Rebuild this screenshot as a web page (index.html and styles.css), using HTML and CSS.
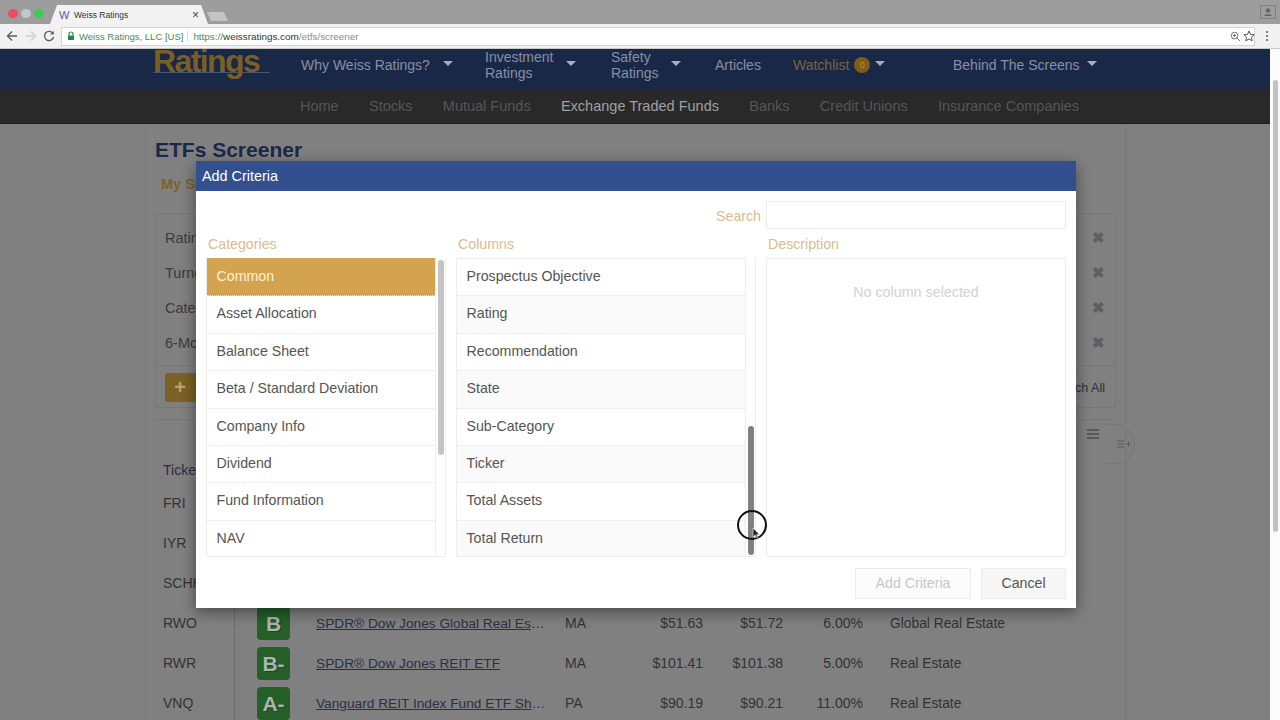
FILE: index.html
```html
<!DOCTYPE html>
<html lang="en">
<head>
<meta charset="utf-8">
<title>Weiss Ratings</title>
<link rel="stylesheet" href="styles.css">
</head>
<body>
<header class="browser">
  <div class="tabstrip">
    <div class="lights"><i class="light red"></i><i class="light grey"></i><i class="light green"></i></div>
    <div class="tab">
      <span class="favicon">W</span>
      <span class="tab-title">Weiss Ratings</span>
      <span class="tab-close">×</span>
    </div>
    <div class="newtab"></div>
    <div class="profile">
      <svg viewBox="0 0 18 16" width="18" height="16"><rect x="1.5" y="1.5" width="15" height="13" fill="none" stroke="#808080"/><circle cx="9" cy="6.5" r="2.2" fill="#666"/><path d="M5 12c.6-2.2 7.4-2.2 8 0z" fill="#666"/></svg>
    </div>
  </div>
  <div class="toolbar">
    <svg class="tool" viewBox="0 0 12 12" width="12" height="12"><path d="M11 6H2M6 1.5 1.5 6 6 10.500" fill="none" stroke="#5f5f5f" stroke-width="1.400"/></svg>
    <svg class="tool" viewBox="0 0 12 12" width="12" height="12"><path d="M1 6h9M6 1.500 10.500 6 6 10.500" fill="none" stroke="#d0d0d0" stroke-width="1.400"/></svg>
    <svg class="tool" viewBox="0 0 12 12" width="12" height="12"><path d="M10 3.500A4.600 4.600 0 1 0 10.600 7" fill="none" stroke="#5f5f5f" stroke-width="1.400"/><path d="M10.800 .8v3.700H7.100z" fill="#5f5f5f"/></svg>
    <div class="omnibox">
      <svg class="lock" viewBox="0 0 8 10" width="8" height="10"><path d="M2 4.500V3a2 2 0 0 1 4 0v1.500" fill="none" stroke="#1f8a4c" stroke-width="1.200"/><rect x="1" y="4.500" width="6" height="4.500" fill="#1f8a4c"/></svg>
      <span class="secure">Weiss Ratings, LLC [US]</span>
      <span class="url"><span class="url-scheme">https://</span><span class="url-host">weissratings.com</span>/etfs/screener</span>
      <svg class="omni-icon" viewBox="0 0 12 12" width="11" height="11"><circle cx="5" cy="5" r="3.600" fill="none" stroke="#666"/><path d="M7.800 7.800 11 11M5 3.300v3.400M3.300 5h3.400" stroke="#666" fill="none"/></svg>
      <svg class="omni-icon star" viewBox="0 0 12 12" width="12" height="12"><path d="m6 1 1.500 3.400 3.700.4-2.800 2.400.8 3.600L6 9 2.800 10.800l.8-3.600L.8 4.800l3.700-.4z" fill="none" stroke="#555"/></svg>
    </div>
    <svg class="menu-dots" viewBox="0 0 4 12" width="4" height="12"><circle cx="2" cy="2" r="1.100" fill="#666"/><circle cx="2" cy="6" r="1.100" fill="#666"/><circle cx="2" cy="10" r="1.100" fill="#666"/></svg>
  </div>
</header>

<div class="viewport">
  <div class="site">
    <nav class="mainnav">
      <div class="logo">Ratings</div>
      <div class="navlinks">
        <a class="nav-item n-why"><span>Why Weiss Ratings?</span><i class="caret"></i></a>
        <a class="nav-item n-inv"><span>Investment<br>Ratings</span><i class="caret"></i></a>
        <a class="nav-item n-saf"><span>Safety<br>Ratings</span><i class="caret"></i></a>
        <a class="nav-item n-art"><span>Articles</span></a>
        <a class="nav-item n-watch"><span>Watchlist</span><span class="count">0</span><i class="caret"></i></a>
        <a class="nav-item n-behind"><span>Behind The Screens</span><i class="caret"></i></a>
      </div>
    </nav>
    <nav class="subnav">
      <a>Home</a><a>Stocks</a><a>Mutual Funds</a><a class="active">Exchange Traded Funds</a><a>Banks</a><a>Credit Unions</a><a>Insurance Companies</a>
    </nav>

    <main class="column">
      <h1 class="title">ETFs Screener</h1>
      <div class="saved">My Saved Screeners</div>
      <section class="criteria">
        <div class="crit-row"><span>Rating</span><b class="remove">✖</b></div>
        <div class="crit-row"><span>Turnover</span><b class="remove">✖</b></div>
        <div class="crit-row"><span>Category</span><b class="remove">✖</b></div>
        <div class="crit-row"><span>6-Month</span><b class="remove">✖</b></div>
        <div class="crit-actions"><span class="plus">+</span><span class="search-all">Search All</span></div>
      </section>
      <section class="results">
        <div class="results-tools">
          <svg class="hamburger" viewBox="0 0 14 10" width="14" height="10"><path d="M1 1h12M1 5h12M1 9h12" stroke="#4d4d4d" stroke-width="1.500"/></svg>
          <div class="add-col">
            <svg viewBox="0 0 16 8" width="16" height="8"><path d="M1 1h7M1 4h7M1 7h7M10 4h5M12.500 1.500v5" stroke="#5c5c5c"/></svg>
          </div>
        </div>
        <div class="row head"><span class="cell-ticker">Ticker</span></div>
        <div class="row"><span class="cell-ticker">FRI</span></div>
        <div class="row"><span class="cell-ticker">IYR</span></div>
        <div class="row"><span class="cell-ticker">SCHH</span></div>
        <div class="row"><span class="cell-ticker">RWO</span><span class="cell-grade"><b class="grade">B</b></span><a class="cell-name">SPDR® Dow Jones Global Real Estate ETF</a><span>MA</span><span class="num">$51.63</span><span class="num">$51.72</span><span class="num">6.00%</span><span class="cell-cat">Global Real Estate</span></div>
        <div class="row"><span class="cell-ticker">RWR</span><span class="cell-grade"><b class="grade">B-</b></span><a class="cell-name">SPDR® Dow Jones REIT ETF</a><span>MA</span><span class="num">$101.41</span><span class="num">$101.38</span><span class="num">5.00%</span><span class="cell-cat">Real Estate</span></div>
        <div class="row"><span class="cell-ticker">VNQ</span><span class="cell-grade"><b class="grade">A-</b></span><a class="cell-name">Vanguard REIT Index Fund ETF Shares</a><span>PA</span><span class="num">$90.19</span><span class="num">$90.21</span><span class="num">11.00%</span><span class="cell-cat">Real Estate</span></div>
      </section>
    </main>

    <div class="modal">
      <div class="modal-head">Add Criteria</div>
      <div class="modal-body">
        <div class="search-row"><label class="gold-label">Search</label><div class="search-input"></div></div>
        <div class="pickers">
          <div class="picker">
            <div class="gold-label picker-label">Categories</div>
            <div class="listbox">
              <ul class="list">
                <li class="selected">Common</li><li>Asset Allocation</li><li>Balance Sheet</li><li>Beta / Standard Deviation</li><li>Company Info</li><li>Dividend</li><li>Fund Information</li><li>NAV</li>
              </ul>
              <div class="thumb thumb-cat"></div>
            </div>
          </div>
          <div class="picker">
            <div class="gold-label picker-label">Columns</div>
            <div class="listbox">
              <ul class="list zebra">
                <li>Prospectus Objective</li><li>Rating</li><li>Recommendation</li><li>State</li><li>Sub-Category</li><li>Ticker</li><li>Total Assets</li><li>Total Return</li>
              </ul>
              <div class="thumb thumb-col"></div>
            </div>
          </div>
          <div class="picker">
            <div class="gold-label picker-label">Description</div>
            <div class="descbox">No column selected</div>
          </div>
        </div>
        <div class="modal-foot">
          <button class="btn disabled">Add Criteria</button>
          <button class="btn cancel">Cancel</button>
        </div>
      </div>
      <div class="pointer">
        <svg viewBox="0 0 8 12" width="8" height="12"><path d="M1 1v9l2.200-2 1.500 3 1.400-.7-1.500-2.900H7.500z" fill="#222" stroke="#eee" stroke-width=".6"/></svg>
      </div>
    </div>
  </div>
  <div class="page-scroll"><div class="page-thumb"></div></div>
</div>
</body>
</html>
```
FILE: styles.css
```css
* { box-sizing: border-box; }
html, body { margin: 0; height: 720px; overflow: hidden; }
body { font-family: "Liberation Sans", Arial, sans-serif; background: #808080; color: #3b3b3b; }
ul { list-style: none; margin: 0; padding: 0; }

/* browser */
.browser { height: 49px; background: #f1f1f1; border-bottom: 1px solid #c9c9c9; }
.tabstrip { height: 24px; background: #9d9d9d; display: flex; align-items: flex-end; position: relative; }
.lights { display: flex; gap: 3px; padding-left: 8px; width: 50px; align-self: flex-start; padding-top: 9px; }
.light { width: 10px; height: 9px; border-radius: 50%; display: block; }
.red { background: #ee4b5b; }
.grey { background: #c6c6c6; }
.green { background: #3ecb55; }
.tab { width: 158px; height: 19px; background: #f2f2f2; clip-path: polygon(0 100%, 7px 0, calc(100% - 7px) 0, 100% 100%); display: flex; align-items: center; padding-left: 9px; padding-right: 9px; }
.favicon { font-size: 11px; color: #5a56b0; width: 15px; }
.tab-title { font-size: 8.500px; color: #333; flex: 1; }
.tab-close { font-size: 12px; color: #444; }
.newtab { width: 21px; height: 9px; margin-bottom: 3px; margin-left: -1px; background: #c4c4c4; clip-path: polygon(0 0, 80% 0, 100% 100%, 20% 100%); }
.profile { position: absolute; right: 3px; top: 4px; width: 18px; height: 16px; }
.toolbar { height: 24px; display: flex; align-items: center; padding-left: 6px; }
.tool { margin-right: 6.500px; flex: none; }
.omnibox { width: 1194px; height: 19px; margin-left: -.5px; background: #fff; border: 1px solid #d3d3d3; display: flex; align-items: center; padding-left: 5px; }
.lock { margin-right: 4px; flex: none; }
.secure { color: #3f8d5e; padding-right: 4px; border-right: 1px solid #ddd; margin-right: 5px; font-size: 9.500px; }
.url { color: #8a8a8a; flex: 1; font-size: 9.900px; }
.url-scheme { color: #3f8d5e; }
.url-host { color: #333; }
.omni-icon { margin-left: 3px; flex: none; }
.star { margin-left: 2px; margin-right: -1px; }
.menu-dots { margin-left: 10px; }

/* page */
.viewport { display: flex; height: 671px; }
.site { position: relative; width: 1270px; height: 671px; overflow: hidden; }
.page-scroll { width: 10px; background: #fbfbfb; padding: 31px 2px 0 3px; }
.page-thumb { height: 452px; background: #c2c2c2; border-radius: 3px; }

.mainnav { height: 41px; background: #1a2848; display: flex; padding-left: 153px; }
.logo { width: 117px; height: 25px; margin-top: -1px; margin-right: 31px; font: bold 32px/26px "Liberation Sans", Arial, sans-serif; letter-spacing: -1.600px; color: #7a5f22; border-bottom: 1px solid #46547a; flex: none; }
.navlinks { display: flex; align-items: center; font-size: 14px; color: #868fa5; height: 32px; }
.nav-item { display: flex; align-items: center; line-height: 16px; flex: none; }
.n-why { width: 184px; }
.n-inv { width: 126px; }
.n-saf { width: 104px; }
.n-art { width: 78px; }
.n-watch { width: 160px; color: #7a6535; }
.caret { width: 0; height: 0; border-left: 5px solid transparent; border-right: 5px solid transparent; border-top: 5px solid #a6adbd; margin-left: 13px; display: block; margin-top: -4px; }
.count { width: 16px; height: 16px; border-radius: 50%; background: #7f5d16; color: #b8933f; font-size: 9px; line-height: 16px; text-align: center; margin-left: 5px; }
.n-watch .caret { margin-left: 5px; }
.n-behind .caret { margin-left: 7px; }

.subnav { height: 34px; background: #292929; display: flex; align-items: center; gap: 30.300px; padding: 0 0 2px 300px; font-size: 14.500px; color: #565656; border-bottom: 1px solid #1c1c1c; }
.subnav .active { color: #a0a0a0; }

.column { width: 981px; height: 600px; margin-left: 145px; border-left: 1px solid #787878; border-right: 1px solid #787878; padding: 13px 9px 0; }
.title { margin: 0; font-size: 21px; line-height: 26px; color: #1c2847; font-weight: bold; }
.saved { margin: 12px 0 0 6px; font-size: 14.500px; line-height: 18px; font-weight: bold; color: #7d6329; }
.criteria { margin-top: 20px; height: 195px; border: 1px solid #777; padding: 6px 10px 0 9px; }
.crit-row { height: 35px; display: flex; justify-content: space-between; align-items: center; font-size: 14.500px; }
.remove { font-size: 15px; color: #5f5f5f; }
.crit-actions { margin-top: 5px; border-top: 1px solid #777; margin-left: -9px; margin-right: -10px; padding: 7px 10px 0 9px; display: flex; justify-content: space-between; align-items: center; }
.plus { width: 34px; height: 29px; background: #7c6126; color: #b8a377; border-radius: 2px; font-size: 20px; font-weight: bold; text-align: center; line-height: 28px; padding-right: 4px; }
.search-all { font-size: 12.500px; color: #2b2e42; }

.results { margin-top: 11px; position: relative; border-top: 1px solid #777; }
.results-tools { height: 37px; position: relative; }
.hamburger { position: absolute; left: 931px; top: 9px; }
.add-col { position: absolute; left: 950px; top: 4px; width: 30px; height: 40px; border: 1px solid #777; border-left: 0; border-radius: 0 20px 20px 0; display: flex; align-items: center; padding-left: 11px; }
.row { height: 40px; display: grid; grid-template-columns: 80px 81px 249px 60px 78px 80px 80px 1fr; align-items: center; font-size: 14px; color: #333; }
.row.head { color: #2b2e42; height: 26px; }
.cell-ticker { padding-left: 8px; border-right: 1px solid #6c6c6c; height: 100%; display: flex; align-items: center; }
.cell-grade { padding-left: 22px; }
.grade { width: 33px; height: 33px; border-radius: 4px; background: #266029; color: #a9b6a9; display: block; font-size: 21px; line-height: 33px; text-align: center; text-shadow: 1px 1px 1px #333; }
.cell-name { color: #2a3048; text-decoration: underline; white-space: nowrap; overflow: hidden; text-overflow: ellipsis; width: 232px; font-size: 13.700px; }
.num { text-align: right; }
.cell-cat { padding-left: 27px; white-space: nowrap; font-size: 13.800px; }

/* modal */
.modal { position: absolute; left: 196px; top: 112px; width: 880px; height: 447px; background: #fff; box-shadow: 0 4px 14px rgba(0,0,0,.45); }
.modal-head { height: 30px; background: #32508f; color: #fff; font-size: 14.400px; line-height: 31px; padding-left: 6px; }
.modal-body { padding: 10px; }
.search-row { display: flex; justify-content: flex-end; align-items: center; gap: 5px; }
.gold-label { font-size: 14.200px; color: #d6bd92; }
.search-row .gold-label { padding-top: 2px; }
.search-input { width: 300px; height: 28px; border: 1px solid #ececec; }
.pickers { display: grid; grid-template-columns: 240px 300px 300px; gap: 10px; }
.picker-label { height: 29px; line-height: 30px; padding-left: 2px; }
.listbox { height: 299px; border: 1px solid #ededed; border-top: 0; position: relative; overflow: hidden; }
.list { height: 100%; width: calc(100% - 9px); border-right: 1px solid #eee; }
.list li { height: 37.400px; line-height: 35px; padding-left: 9.500px; font-size: 14.200px; color: #555; border-bottom: 1px dotted #e4e4e4; }
.list li:first-child { height: 38.400px; border-top: 1px solid #ededed; }
.list .selected { background: #d4a34f; color: #fff1d6; }
.list li.selected { border-top-color: #d4a34f; }
.zebra li:nth-child(even) { background: #fafafa; }
.thumb { position: absolute; right: 1px; width: 6px; border-radius: 3px; }
.thumb-cat { top: 2px; height: 195px; background: #c4c4c4; }
.thumb-col { top: 168px; height: 129px; background: #808080; }
.descbox { height: 299px; border: 1px solid #ededed; text-align: center; padding-top: 25px; font-size: 14.300px; line-height: 16px; color: #d2d2d2; }
.modal-foot { display: flex; justify-content: flex-end; gap: 10px; margin-top: 11px; }
.btn { height: 31px; font: 14.200px "Liberation Sans", Arial, sans-serif; background: #f7f7f7; border: 1px solid #ececec; color: #555; padding: 0 0 2px; }
.disabled { width: 116px; color: #c8c8c8; background: #fbfbfb; }
.cancel { width: 85px; }
.pointer { position: absolute; left: 541px; top: 349px; width: 30px; height: 30px; border: 2px solid #111; border-radius: 50%; padding: 15px 0 0 13px; line-height: 0; }
```
